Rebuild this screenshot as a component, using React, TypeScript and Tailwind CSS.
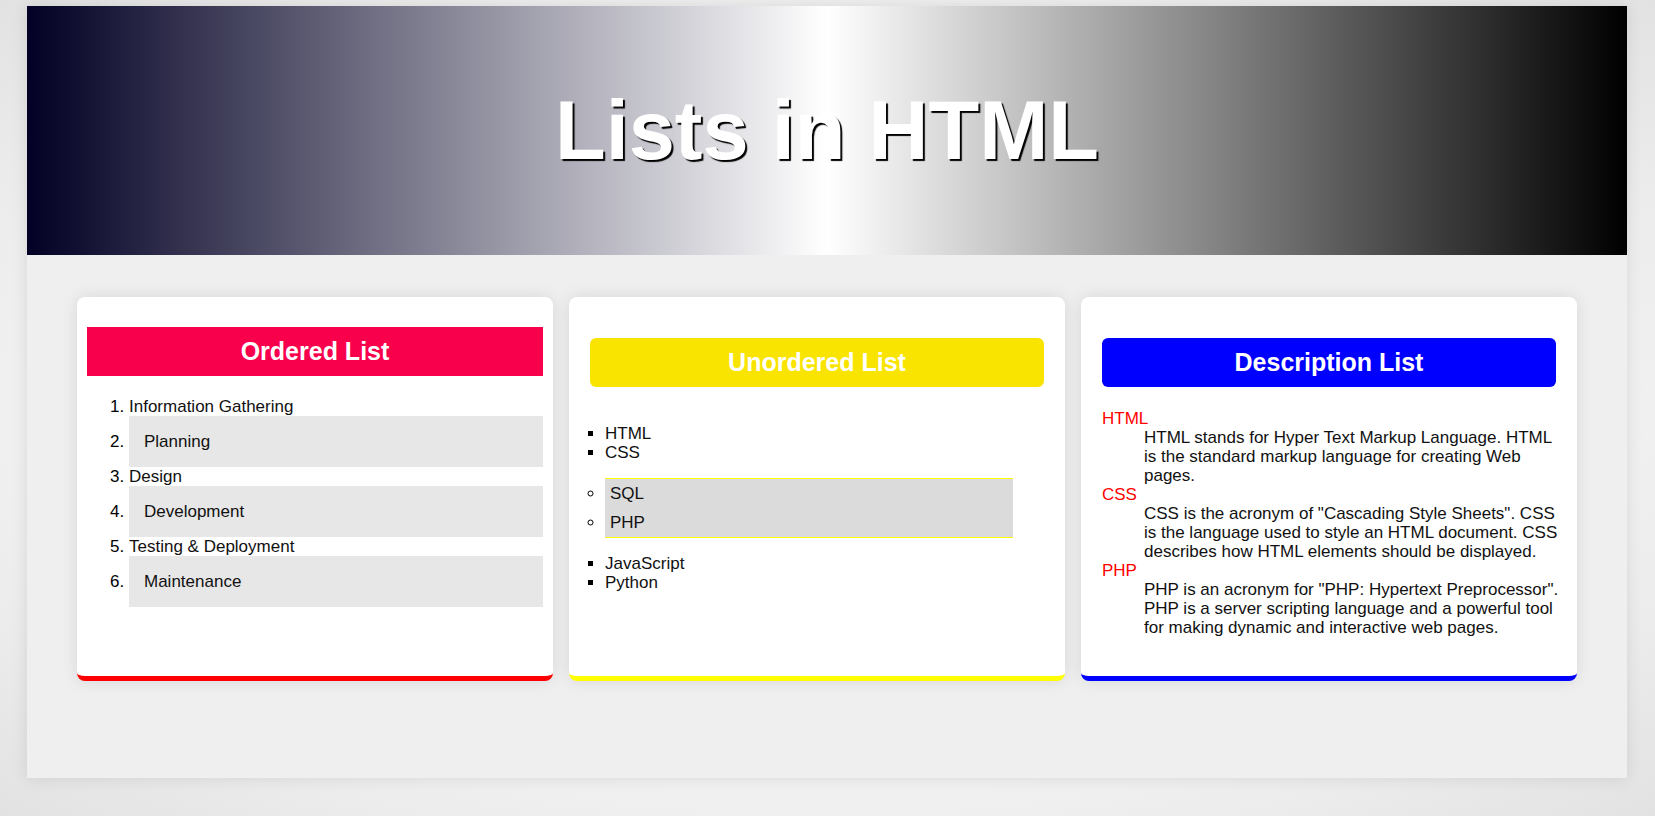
import type { ReactNode } from "react";

const phases = [
  "Information Gathering",
  "Planning",
  "Design",
  "Development",
  "Testing & Deployment",
  "Maintenance",
];

const terms = [
  {
    term: "HTML",
    text: "HTML stands for Hyper Text Markup Language. HTML is the standard markup language for creating Web pages.",
  },
  {
    term: "CSS",
    text: 'CSS is the acronym of "Cascading Style Sheets". CSS is the language used to style an HTML document. CSS describes how HTML elements should be displayed.',
  },
  {
    term: "PHP",
    text: 'PHP is an acronym for "PHP: Hypertext Preprocessor". PHP is a server scripting language and a powerful tool for making dynamic and interactive web pages.',
  },
];

function Card({ className, children }: { className: string; children: ReactNode }) {
  return (
    <section
      className={`min-h-[384px] rounded-lg border-b-5 bg-white shadow-[0_0_16px_rgba(0,0,0,0.1)] ${className}`}
    >
      {children}
    </section>
  );
}

function CardTitle({ className, children }: { className: string; children: ReactNode }) {
  return (
    <h2 className={`py-2.5 text-center text-[25px] leading-[29px] font-bold text-white ${className}`}>
      {children}
    </h2>
  );
}

export default function App() {
  return (
    <div className="min-h-screen bg-[radial-gradient(ellipse_at_center,#ffffff_0%,#f0f0f0_70%,#e2e2e2_100%)] pt-1.5 pr-7 pb-[38px] pl-[27px] font-['Liberation_Sans',Arial,sans-serif] text-[17px] leading-[19px] text-[#111]">
      <main className="mx-auto max-w-[1600px] bg-[#efefef] pb-[97px] shadow-[0_0_16px_rgba(0,0,0,0.1)]">
        <header className="bg-[linear-gradient(90deg,#020024_0%,#ffffff_50%,#000000_100%)] py-[76px]">
          <h1 className="text-center text-[83px] leading-[97px] font-bold text-white [text-shadow:2px_2px_1px_#000]">
            Lists in HTML
          </h1>
        </header>

        <div className="grid grid-cols-1 gap-4 px-[50px] pt-[42px] lg:grid-cols-[476fr_496fr_496fr]">
          <Card className="border-[#ff0000] px-2.5 pt-[30px]">
            <CardTitle className="bg-[#f9004d]">Ordered List</CardTitle>
            <ol className="mt-[21px] list-decimal pl-[42px]">
              {phases.map((phase) => (
                <li key={phase} className="marker:text-black even:bg-[#e7e7e7] even:py-4 even:pl-[15px]">
                  {phase}
                </li>
              ))}
            </ol>
          </Card>

          <Card className="border-[#ffff00] px-[21px] pt-[41px]">
            <CardTitle className="rounded-md bg-[#f9e400]">Unordered List</CardTitle>
            <ul className="mt-[37px] mr-[31px] ml-[15px] list-[square] marker:text-black">
              <li>HTML</li>
              <li>CSS</li>
              <li className="list-none">
                <ul className="my-4 list-[circle] border-y border-[#ffff00] bg-[#dbdbdb]">
                  <li className="p-[5px]">SQL</li>
                  <li className="p-[5px]">PHP</li>
                </ul>
              </li>
              <li>JavaScript</li>
              <li>Python</li>
            </ul>
          </Card>

          <Card className="border-[#0000ff] px-[21px] pt-[41px]">
            <CardTitle className="rounded-md bg-[#0000ff]">Description List</CardTitle>
            <dl className="mt-[22px] -mr-1.5">
              {terms.map(({ term, text }) => (
                <div key={term}>
                  <dt className="text-[#ff0000]">{term}</dt>
                  <dd className="ml-[42px]">{text}</dd>
                </div>
              ))}
            </dl>
          </Card>
        </div>
      </main>
    </div>
  );
}
